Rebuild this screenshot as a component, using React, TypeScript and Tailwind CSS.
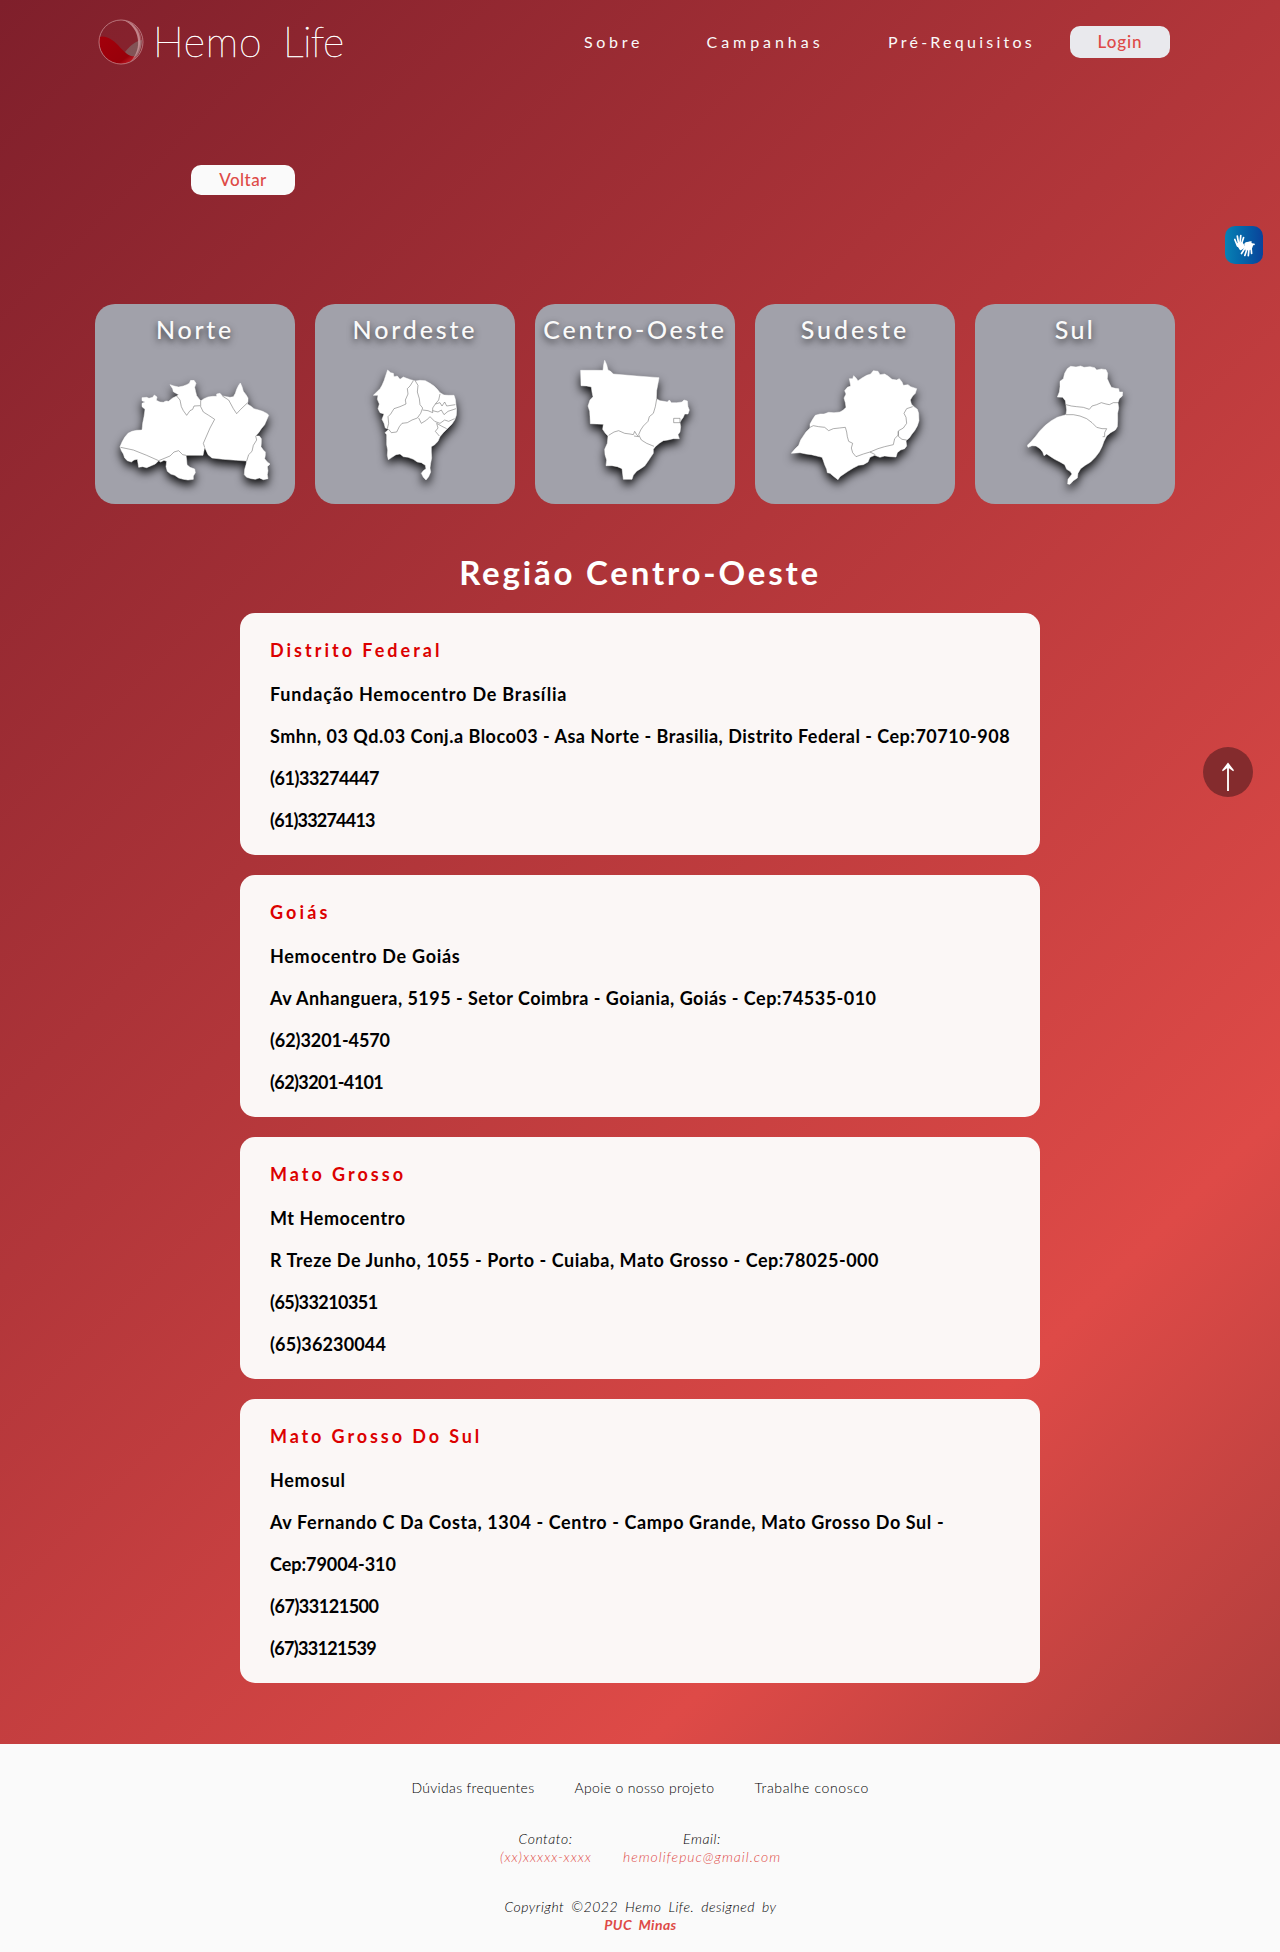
import { type ReactNode } from "react";

const regions: { name: string; tracking: string; shape: string; borders: string }[] = [
  {
    name: "Norte",
    tracking: "tracking-[2.7px]",
    shape:
      "M156 293L170 292 177 295 188 292 193 285 201 291 199 301 210 306 220 307 228 303 236 304 248 294 260 288 266 284 258 280 250 275 248 266 240 254 252 258 266 261 280 258 290 254 298 250 302 241 312 241 318 250 314 262 317 275 320 287 327 296 332 303 342 296 354 291 368 289 380 289 380 282 390 280 397 288 410 290 420 292 430 290 436 280 440 268 446 256 451 249 456 260 460 274 468 284 474 294 474 304 472 312 482 318 492 326 506 330 518 334 532 341 536 346 530 360 524 374 514 386 506 398 497 408 508 408 514 416 514 428 513 440 520 450 526 456 526 466 524 476 532 486 540 492 532 500 534 512 532 524 534 536 520 539 508 534 496 538 484 536 470 532 463 524 464 508 468 494 470 483 440 481 400 478 366 474 354 464 344 442 339 466 288 466 290 480 291 494 300 502 314 507 316 518 310 528 310 538 294 540 280 538 266 534 254 526 242 522 232 514 228 500 230 484 222 481 212 486 206 482 196 492 182 498 170 503 158 500 146 502 144 490 142 478 132 480 124 486 112 482 104 474 100 462 94 452 90 440 96 426 104 412 114 400 126 394 140 391 156 390 158 370 162 350 165 328 156 320 156 310 166 306 156 302Z",
    borders:
      "M260 288L270 300 274 320 280 332 290 346 300 332 308 328 312 318 330 317M332 303L332 320 340 336 356 346 374 358M374 358L360 384 340 430 344 442M397 288L416 300 430 326 440 341 452 328 472 309M92 442L130 450 170 466 206 482 240 468 252 456 266 452 278 464 288 466M497 408L500 420 490 436 486 454 476 464 470 483",
  },
  {
    name: "Nordeste",
    tracking: "tracking-[2.85px]",
    shape:
      "M233 210L242 218 250 220 252 230 262 228 270 238 280 231 290 235 302 239 316 243 330 241 346 242 360 250 372 258 382 268 390 278 402 285 416 286 432 286 436 298 438 314 440 330 439 346 434 360 426 372 412 386 400 398 390 410 384 424 374 434 364 440 364 456 365 474 362 490 360 504 362 516 356 530 348 540 340 532 334 520 340 512 348 506 346 496 334 488 322 486 310 478 294 472 280 470 270 462 258 464 246 472 235 479 232 466 233 450 230 434 230 418 230 404 225 398 236 388 226 384 222 370 216 358 222 342 210 338 204 326 208 312 202 298 204 286 190 286 200 276 210 266 216 256 222 242 226 230Z",
    borders:
      "M310 242L300 258 292 266 294 282 286 300 288 312 270 320 252 326 242 342 234 350 236 370 232 386M316 243L324 256 322 276 328 296 330 314 338 324 332 340 322 354 306 360 292 368 276 370 268 380 260 396 244 398 236 388M338 330L354 332 368 338 368 324 376 312 386 300 390 282M376 312L390 308 396 318 404 306 410 318 436 314M368 332L384 336 394 330 402 344 414 334 438 326M326 354L334 370 350 360 360 350 374 364 390 370 404 360 416 364 434 356M380 370L394 378 410 386M380 370L384 384 376 394 388 408",
  },
  {
    name: "Centro-Oeste",
    tracking: "tracking-[2.7px]",
    shape:
      "M152 211L219 211 221 194 224 181 230 194 234 210 242 214 250 222 320 228 387 233 384 250 380 272 379 296 390 302 402 304 412 306 418 300 424 308 440 308 456 306 462 300 472 303 474 320 478 330 474 342 464 342 460 352 454 360 450 368 452 380 450 396 444 404 448 416 430 416 414 420 400 422 388 430 376 440 370 448 370 460 362 472 354 484 344 498 332 506 320 514 310 526 306 538 280 538 278 522 276 506 262 500 246 497 228 497 230 480 225 464 224 448 232 430 234 408 226 400 218 388 220 373 181 371 180 350 179 334 174 318 180 300 189 290 186 276 184 261 170 258 153 257Z",
    borders:
      "M380 297L376 320 370 340 358 350 354 364 340 378 332 390 326 404M236 406L252 396 266 392 284 400 300 402 310 404 314 394 320 404 326 410 312 408M326 404L334 420 350 430 372 439M431 355L450 355 450 368 431 368Z",
  },
  {
    name: "Sudeste",
    tracking: "tracking-[3px]",
    shape:
      "M298 236L308 236 311 227 318 234 324 242 336 234 350 226 362 222 370 212 384 214 390 224 404 222 414 228 426 238 440 240 448 236 456 246 460 256 474 254 482 260 500 266 496 280 488 288 481 300 484 312 492 320 502 328 506 340 507 362 502 378 494 392 486 402 478 414 468 422 470 438 464 446 452 450 442 458 438 471 420 470 404 468 390 472 374 466 360 472 354 486 340 494 326 496 310 504 294 514 282 522 270 530 264 539 252 530 240 520 232 518 230 508 224 494 220 482 216 472 200 468 184 464 168 462 150 458 124 460 134 448 146 436 152 420 160 408 168 396 180 384 180 372 188 358 196 346 210 342 222 342 236 337 252 338 270 336 280 330 288 322 286 308 282 294 288 282 284 272 292 262 302 258 300 246Z",
    borders:
      "M180 382L190 377 206 380 224 382 236 392 250 386 268 384 286 382 290 396 292 410 296 424 308 430 304 444 308 458 318 470 340 462 360 456 384 446 404 440 430 434 434 416 444 406 446 392 460 384 470 370 468 352 462 340 470 326 488 320M444 394L446 410 456 418 470 420M360 456L376 464",
  },
  {
    name: "Sul",
    tracking: "tracking-[2.4px]",
    shape:
      "M292 206L302 199 318 201 332 198 342 202 360 200 374 203 380 210 394 207 408 209 413 220 412 236 418 250 424 262 436 265 446 266 448 276 458 276 457 288 448 296 444 308 446 324 443 340 443 362 442 380 436 390 422 398 410 408 402 424 396 440 388 456 376 472 362 486 346 496 332 506 324 520 322 534 310 542 300 553 293 552 294 538 306 522 300 514 290 508 284 494 270 486 254 478 242 470 230 462 222 467 218 456 210 446 198 438 186 437 174 442 172 436 184 424 196 410 210 392 226 376 244 362 262 352 288 344 290 330 288 316 286 302 278 292 262 291 268 276 270 260 270 244 280 236 284 220Z",
    borders:
      "M288 314L304 318 320 320 340 322 358 328 366 318 380 314 394 308 408 312 418 314 430 308 446 308M288 344L310 344 330 348 350 356 366 368 380 382 396 386 410 386 404 398 404 410 398 410",
  },
];

const centers: { state: string; stateTracking: string; lines: { text: string; tracking: string }[] }[] = [
  {
    state: "Distrito Federal",
    stateTracking: "tracking-[3px]",
    lines: [
      { text: "Fundação Hemocentro De Brasília", tracking: "tracking-[0.8px]" },
      {
        text: "Smhn, 03 Qd.03 Conj.a Bloco03 - Asa Norte - Brasilia, Distrito Federal - Cep:70710-908",
        tracking: "tracking-[0.49px]",
      },
      { text: "(61)33274447", tracking: "tracking-[-0.45px]" },
      { text: "(61)33274413", tracking: "tracking-[-0.8px]" },
    ],
  },
  {
    state: "Goiás",
    stateTracking: "tracking-[3.1px]",
    lines: [
      { text: "Hemocentro De Goiás", tracking: "tracking-[0.7px]" },
      {
        text: "Av Anhanguera, 5195 - Setor Coimbra - Goiania, Goiás - Cep:74535-010",
        tracking: "tracking-[0.48px]",
      },
      { text: "(62)3201-4570", tracking: "tracking-[-0.08px]" },
      { text: "(62)3201-4101", tracking: "tracking-[-0.6px]" },
    ],
  },
  {
    state: "Mato Grosso",
    stateTracking: "tracking-[3px]",
    lines: [
      { text: "Mt Hemocentro", tracking: "tracking-[0.58px]" },
      {
        text: "R Treze De Junho, 1055 - Porto - Cuiaba, Mato Grosso - Cep:78025-000",
        tracking: "tracking-[0.54px]",
      },
      { text: "(65)33210351", tracking: "tracking-[-0.56px]" },
      { text: "(65)36230044", tracking: "tracking-[0.14px]" },
    ],
  },
  {
    state: "Mato Grosso Do Sul",
    stateTracking: "tracking-[2.9px]",
    lines: [
      { text: "Hemosul", tracking: "tracking-[0.64px]" },
      {
        text: "Av Fernando C Da Costa, 1304 - Centro - Campo Grande, Mato Grosso Do Sul -",
        tracking: "tracking-[0.6px]",
      },
      { text: "Cep:79004-310", tracking: "tracking-[-0.04px]" },
      { text: "(67)33121500", tracking: "tracking-[-0.48px]" },
      { text: "(67)33121539", tracking: "tracking-[-0.68px]" },
    ],
  },
];

function Logo() {
  return (
    <div className="flex items-center">
      <svg viewBox="0 0 46 46" className="size-[46px]" fill="none">
        <defs>
          <linearGradient id="blood" x1="0" y1="0" x2="1" y2="1">
            <stop offset="0" stopColor="#a3000b" />
            <stop offset="0.75" stopColor="#98000a" />
            <stop offset="1" stopColor="#e0303a" />
          </linearGradient>
        </defs>
        <path d="M27 33C32 27 37 22 44 21C44 30 40 38 33 42Z" fill="#817571" fillOpacity="0.6" />
        <path d="M1 18C8 16 14 20 20 26C26 33 31 38 38 37.500C33 43 28 45 23 45C11 45 0 35 1 18Z" fill="url(#blood)" />
        <path d="M24 .7C42 3 50 27 32 43C46 29 41 6 24 .7Z" fill="#d5a5a9" fillOpacity="0.7" />
        <path d="M29 1.500C48 9 48 34 32 43.500C44 33 44 12 29 1.500Z" fill="#c98f95" fillOpacity="0.45" />
        <circle cx="23" cy="23" r="22" stroke="#cf9ba0" strokeOpacity="0.75" strokeWidth="0.9" />
      </svg>
      <span className="ml-[9px] w-[130px] text-[41px] leading-[46px] font-thin tracking-[0.8px] text-white [-webkit-text-stroke:0.5px_white]">
        Hemo
      </span>
      <span className="text-[41px] leading-[46px] font-thin tracking-[-0.6px] text-white [-webkit-text-stroke:0.5px_white]">
        Life
      </span>
    </div>
  );
}

function Pill({ children, className }: { children: ReactNode; className: string }) {
  return (
    <button className={`flex items-center justify-center rounded-[10px] font-medium text-[#de4a47] ${className}`}>
      {children}
    </button>
  );
}

function Header() {
  return (
    <header className="flex h-[84px] items-center pl-[98px]">
      <Logo />
      <nav className="ml-auto grid grid-cols-[122.500px_181.500px_182px_100px] items-center pr-[110px] text-base text-[#fafafa]">
        <a className="tracking-[3.700px]">Sobre</a>
        <a className="tracking-[3.950px]">Campanhas</a>
        <a className="tracking-[3.250px]">Pré-Requisitos</a>
        <Pill className="h-8 bg-[#e9e9ed] text-[17px] tracking-[0.900px]">Login</Pill>
      </nav>
    </header>
  );
}

function RegionCard({ name, tracking, shape, borders }: (typeof regions)[number]) {
  return (
    <a className="flex size-[200px] flex-col rounded-[20px] bg-[#a1a1aa]">
      <h2
        className={`h-[52px] text-center text-[25px] leading-[50px] font-medium whitespace-nowrap text-[#fafafa] [text-shadow:0_3px_7px_rgba(0,0,0,0.7)] ${tracking}`}
      >
        {name}
      </h2>
      <svg
        viewBox="15 168 600 444"
        className="h-[148px] w-[200px] overflow-visible drop-shadow-[0_5px_5px_rgba(0,0,0,0.9)]"
      >
        <path d={shape} fill="#fff" stroke="#fff" strokeWidth="1.500" strokeLinejoin="round" />
        <path d={borders} fill="none" stroke="#666" strokeWidth="1.600" strokeLinejoin="round" />
      </svg>
    </a>
  );
}

function LibrasButton() {
  return (
    <button className="absolute top-[226px] left-[1225px] flex size-[38px] items-center justify-center rounded-[10px] bg-linear-to-r from-[#0981b4] to-[#0b429a]">
      <svg viewBox="0 0 38 38" className="size-[38px]" fill="none" stroke="#fff" strokeLinecap="round">
        <g strokeWidth="1.700">
          <path d="M12.500 20L9.800 13.500M13.500 17L12.300 10M15 17L15.800 9.500M16.500 18L18.600 11.500" />
          <path d="M20 22L16.500 27.500M22 23L19.800 29.500M24 23L23.300 29.700M26 21L26.600 27.500" />
          <path d="M21 17L26 16M26 18L29 18.300" />
        </g>
        <path d="M12 18L17 17 19.500 21 15.500 23.500Z" fill="#fff" strokeWidth="1.500" strokeLinejoin="round" />
        <path d="M20 18L25 16.500 27.500 19 26 23 21 23.500Z" fill="#fff" strokeWidth="1.500" strokeLinejoin="round" />
      </svg>
    </button>
  );
}

function TopButton() {
  return (
    <button className="absolute top-[747px] left-[1203px] flex size-[50px] items-center justify-center rounded-full bg-[#842b2d]">
      <svg viewBox="0 0 50 50" className="size-[50px]">
        <path d="M25 17V44" stroke="#f5f0f0" strokeWidth="2" />
        <path d="M25 15.500L31 23.300 30.200 24.200 25 20.500 19.800 24.200 19 23.300Z" fill="#fff" />
      </svg>
    </button>
  );
}

function Footer() {
  return (
    <footer className="flex h-[208px] flex-col items-center bg-[#fafafa] pt-[35px] text-sm leading-[18px] font-light text-black">
      <div className="grid grid-cols-[163px_180px_114px] whitespace-nowrap">
        <a className="tracking-[0.300px]">Dúvidas frequentes</a>
        <a className="tracking-[0.350px]">Apoie o nosso projeto</a>
        <a className="tracking-[0.620px]">Trabalhe conosco</a>
      </div>
      <div className="mt-[33px] flex gap-8 pl-px text-center italic">
        <div className="w-[91px]">
          <p className="tracking-[0.540px]">Contato:</p>
          <p className="tracking-[0.950px] whitespace-nowrap text-[#de4a47]">(xx)xxxxx-xxxx</p>
        </div>
        <div className="w-[158px]">
          <p className="tracking-[0.600px]">Email:</p>
          <p className="tracking-[0.970px] whitespace-nowrap text-[#de4a47]">hemolifepuc@gmail.com</p>
        </div>
      </div>
      <div className="mt-8 pl-px text-center italic">
        <p className="tracking-[0.500px] [word-spacing:3px]">Copyright ©2022 Hemo Life. designed by</p>
        <p className="font-bold tracking-[0.400px] text-[#de4a47] [word-spacing:3px]">PUC Minas</p>
      </div>
    </footer>
  );
}

export default function App() {
  return (
    <div className="relative h-[1952px] w-[1280px] overflow-hidden bg-[linear-gradient(135deg,#7f1f2b_0%,#de4a47_74%,#a13a39_100%)] font-['Lato',sans-serif]">
      <Header />
      <div className="flex h-[220px] pt-[81px] pl-[191px]">
        <Pill className="h-[30px] w-[104px] bg-[#fafafa] text-[17px] tracking-[0.400px]">Voltar</Pill>
      </div>
      <div className="ml-[95px] flex gap-5">
        {regions.map((region) => (
          <RegionCard key={region.name} {...region} />
        ))}
      </div>
      <main className="mx-auto mt-[43px] flex w-[800px] flex-col">
        <h1 className="mb-4 h-[50px] text-center text-[33px] leading-[50px] font-bold tracking-[2.800px] text-white">
          Região Centro-Oeste
        </h1>
        <div className="flex flex-col gap-5">
          {centers.map((center) => (
            <section
              key={center.state}
              className="rounded-[15px] bg-[#fbf7f6] pt-[15px] pb-[14px] pl-[30px] text-lg leading-[42px] font-bold whitespace-nowrap text-black"
            >
              <h3 className={`leading-[45px] text-[#dc0000] ${center.stateTracking}`}>{center.state}</h3>
              {center.lines.map((line) => (
                <p key={line.text} className={line.tracking}>
                  {line.text}
                </p>
              ))}
            </section>
          ))}
        </div>
      </main>
      <div className="h-[61px]" />
      <Footer />
      <LibrasButton />
      <TopButton />
    </div>
  );
}
